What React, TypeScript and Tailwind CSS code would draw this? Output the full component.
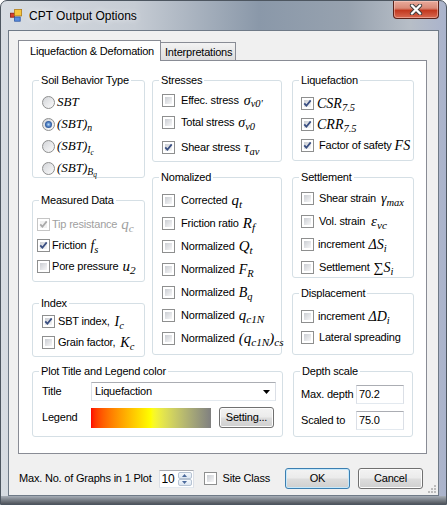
import React from 'react';

// serif italic used for the engineering symbols
const M = "font-['Liberation_Serif',serif] italic";

type Kids = { children?: React.ReactNode };

function Check({ checked = false, disabled = false }: { checked?: boolean; disabled?: boolean }) {
  return (
    <span
      className={`relative shrink-0 w-[13px] h-[13px] border p-[2px] bg-white ${
        disabled ? 'border-[#c5c5c5]' : 'border-[#8e8f8f]'
      }`}
    >
      <span
        className={`block w-full h-full ${
          disabled ? 'bg-[#f1f1f1]' : 'bg-linear-to-br from-[#cbced3] to-[#f7f7f8]'
        }`}
      />
      {checked && (
        <svg className="absolute left-0 top-0" width="11" height="11" viewBox="0 0 11 11">
          <path
            d="M2.2 5.3 L4.4 7.7 L8.7 2.4"
            fill="none"
            stroke={disabled ? '#a9a9a9' : '#3a4f82'}
            strokeWidth="1.8"
          />
        </svg>
      )}
    </span>
  );
}

function Radio({ checked = false }: { checked?: boolean }) {
  return (
    <span className="flex items-center justify-center shrink-0 w-[13px] h-[13px] rounded-full border border-[#8e8f8f] bg-linear-to-br from-[#d3d5d9] to-[#fbfbfb]">
      {checked && (
        <span className="w-[7px] h-[7px] rounded-full bg-radial from-[#b8daf8] via-[#3f6fb5] to-[#1b3b73]" />
      )}
    </span>
  );
}

function Group({ title, className = '', children }: { title: string; className?: string } & Kids) {
  return (
    <div className={`relative border border-[#d5dfe5] rounded-[3px] ${className}`}>
      <span className="absolute left-[6px] top-[-8px] bg-white px-[2px] leading-[14px] whitespace-nowrap">
        {title}
      </span>
      {children}
    </div>
  );
}

function Row({ className = '', children }: { className?: string } & Kids) {
  return <div className={`flex items-center whitespace-nowrap ${className}`}>{children}</div>;
}

const btn =
  'flex items-center justify-center rounded-[3px] border bg-[linear-gradient(#f3f3f3_0%,#ebebeb_48%,#dddddd_52%,#cfcfcf_100%)]';

export default function App() {
  return (
    <div className="w-[447px] h-[505px] overflow-hidden bg-white font-['Liberation_Sans',Arial,sans-serif] text-[11px] tracking-[-0.2px] text-black">
      <div className="w-[447px] h-[505px] flex flex-col rounded-t-[7px] border border-[#4d5660] bg-[linear-gradient(90deg,#d7dce2_0%,#c6ccd4_30%,#8a98a9_58%,#97a2af_78%,#b7bec7_92%,#aab3cc_100%)]">
        {/* title bar */}
        <div className="h-[29px] flex items-center shrink-0">
          <svg className="ml-[9px]" width="12" height="13" viewBox="0 0 12 13">
            <rect x="0.5" y="4.2" width="4" height="4" fill="#d9402f" stroke="#8b1c12" strokeWidth="0.8" />
            <rect x="4.6" y="0.5" width="7" height="6.4" fill="#f6c63e" stroke="#b07d18" strokeWidth="0.8" />
            <rect x="4.6" y="8" width="5.6" height="4.2" fill="#5b8ee0" stroke="#2a55a0" strokeWidth="0.8" />
          </svg>
          <span className="ml-[7px] text-[12px] tracking-normal [text-shadow:0_0_6px_rgba(255,255,255,0.95)]">
            CPT Output Options
          </span>
          <div className="ml-auto mr-[7px] self-start w-[46px] h-[18px] flex items-center justify-center rounded-b-[4px] border border-t-0 border-[#5a2219] bg-[linear-gradient(#e9aa9b_0%,#d98a78_42%,#c2391f_56%,#d86a52_100%)] shadow-[inset_0_0_0_1px_rgba(255,220,210,0.45)]">
            <svg width="14" height="11" viewBox="0 0 14 11">
              <path d="M3 1.5 L11 9.5 M11 1.5 L3 9.5" stroke="#3d3d3d" strokeWidth="4.2" strokeLinecap="round" />
              <path d="M3 1.5 L11 9.5 M11 1.5 L3 9.5" stroke="#ffffff" strokeWidth="2.4" strokeLinecap="round" />
            </svg>
          </div>
        </div>

        {/* client area */}
        <div className="relative ml-[7px] w-[431px] h-[466px] shrink-0 border border-[#6f7a87] bg-[#f0f0f0]">
          {/* tabs */}
          <div className="mt-[9px] ml-[9px] flex items-end h-[20px]">
            <div className="relative z-10 -mb-[1px] w-[143px] h-[21px] flex items-center pl-[11px] bg-white border border-b-0 border-[#898c95]">
              Liquefaction &amp; Defomation
            </div>
            <div className="w-[75px] h-[18px] flex items-center pl-[4px] pt-[1px] border border-l-0 border-b-0 border-[#898c95] bg-linear-to-b from-[#f3f3f3] to-[#dedede]">
              Interpretations
            </div>
          </div>

          {/* tab page */}
          <div className="ml-[9px] w-[409px] h-[394px] border border-[#898c95] bg-white pl-[13px] pt-[19px]">
            <div className="flex items-start">
              {/* left column */}
              <div className="flex flex-col w-[113px]">
                <Group title="Soil Behavior Type" className="h-[98px] pt-[10px] pl-[9px]">
                  <Row className="h-[22px]">
                    <Radio />
                    <span className={`${M} ml-[2px] text-[13px] tracking-normal`}>SBT</span>
                  </Row>
                  <Row className="h-[22px]">
                    <Radio checked />
                    <span className={`${M} ml-[2px] text-[13px] tracking-normal`}>
                      (SBT)<sub>n</sub>
                    </span>
                  </Row>
                  <Row className="h-[22px]">
                    <Radio />
                    <span className={`${M} ml-[2px] text-[13px] tracking-normal`}>
                      (SBT)<sub>I<sub>c</sub></sub>
                    </span>
                  </Row>
                  <Row className="h-[22px]">
                    <Radio />
                    <span className={`${M} ml-[2px] text-[13px] tracking-normal`}>
                      (SBT)<sub>B<sub>q</sub></sub>
                    </span>
                  </Row>
                </Group>

                <Group title="Measured Data" className="mt-[22px] h-[82px] pt-[13px] pl-[4px]">
                  <Row className="h-[21px] text-[#a0a0a0]">
                    <Check checked disabled />
                    <span className="ml-[2px]">Tip resistance</span>
                    <span className={`${M} ml-[4px] text-[15px] tracking-normal`}>
                      q<sub>c</sub>
                    </span>
                  </Row>
                  <Row className="h-[21px]">
                    <Check checked />
                    <span className="ml-[2px]">Friction</span>
                    <span className={`${M} ml-[4px] text-[14px] tracking-normal`}>
                      f<sub>s</sub>
                    </span>
                  </Row>
                  <Row className="h-[21px]">
                    <Check />
                    <span className="ml-[2px]">Pore pressure</span>
                    <span className={`${M} ml-[4px] text-[15px] tracking-normal`}>
                      u<sub>2</sub>
                    </span>
                  </Row>
                </Group>

                <Group title="Index" className="mt-[21px] h-[54px] pt-[7px] pl-[9px]">
                  <Row className="h-[21px]">
                    <Check checked />
                    <span className="ml-[3px]">SBT index,</span>
                    <span className={`${M} ml-[5px] text-[14px] tracking-normal`}>
                      I<sub>c</sub>
                    </span>
                  </Row>
                  <Row className="h-[21px]">
                    <Check />
                    <span className="ml-[3px]">Grain factor,</span>
                    <span className={`${M} ml-[5px] text-[14px] tracking-normal`}>
                      K<sub>c</sub>
                    </span>
                  </Row>
                </Group>
              </div>

              {/* middle column */}
              <div className="flex flex-col w-[130px] ml-[7px]">
                <Group title="Stresses" className="h-[82px] pt-[8px] pl-[9px]">
                  <Row className="h-[22px]">
                    <Check />
                    <span className="ml-[6px]">Effec. stress</span>
                    <span className={`${M} ml-[5px] text-[14px] tracking-normal`}>
                      σ<sub>v0'</sub>
                    </span>
                  </Row>
                  <Row className="h-[23px]">
                    <Check />
                    <span className="ml-[6px]">Total stress</span>
                    <span className={`${M} ml-[4px] text-[14px] tracking-normal`}>
                      σ<sub>v0</sub>
                    </span>
                  </Row>
                  <Row className="mt-[2px] h-[23px]">
                    <Check checked />
                    <span className="ml-[6px]">Shear stress</span>
                    <span className={`${M} ml-[4px] text-[14px] tracking-normal`}>
                      τ<sub>av</sub>
                    </span>
                  </Row>
                </Group>

                <Group title="Nomalized" className="mt-[15px] h-[178px] pt-[11px] pl-[9px]">
                  <Row className="h-[23px]">
                    <Check />
                    <span className="ml-[6px]">Corrected</span>
                    <span className={`${M} ml-[4px] text-[15px] tracking-normal`}>
                      q<sub>t</sub>
                    </span>
                  </Row>
                  <Row className="h-[23px]">
                    <Check />
                    <span className="ml-[6px]">Friction ratio</span>
                    <span className={`${M} ml-[4px] text-[15px] tracking-normal`}>
                      R<sub>f</sub>
                    </span>
                  </Row>
                  <Row className="h-[23px]">
                    <Check />
                    <span className="ml-[6px]">Normalized</span>
                    <span className={`${M} ml-[4px] text-[15px] tracking-normal`}>
                      Q<sub>t</sub>
                    </span>
                  </Row>
                  <Row className="h-[23px]">
                    <Check />
                    <span className="ml-[6px]">Normalized</span>
                    <span className={`${M} ml-[4px] text-[14px] tracking-normal`}>
                      F<sub>R</sub>
                    </span>
                  </Row>
                  <Row className="h-[23px]">
                    <Check />
                    <span className="ml-[6px]">Normalized</span>
                    <span className={`${M} ml-[4px] text-[14px] tracking-normal`}>
                      B<sub>q</sub>
                    </span>
                  </Row>
                  <Row className="h-[23px]">
                    <Check />
                    <span className="ml-[6px]">Normalized</span>
                    <span className={`${M} ml-[4px] text-[15px] tracking-normal`}>
                      q<sub>c1N</sub>
                    </span>
                  </Row>
                  <Row className="h-[23px]">
                    <Check />
                    <span className="ml-[6px]">Normalized</span>
                    <span className={`${M} ml-[4px] text-[15px] tracking-normal`}>
                      (q<sub>c1N</sub>)<sub>cs</sub>
                    </span>
                  </Row>
                </Group>
              </div>

              {/* right column */}
              <div className="flex flex-col w-[122px] ml-[10px]">
                <Group title="Liquefaction" className="h-[81px] pt-[12px] pl-[8px]">
                  <Row className="h-[21px]">
                    <Check checked />
                    <span className={`${M} ml-[3px] text-[14px] tracking-normal`}>
                      CSR<sub>7.5</sub>
                    </span>
                  </Row>
                  <Row className="h-[21px]">
                    <Check checked />
                    <span className={`${M} ml-[3px] text-[14px] tracking-normal`}>
                      CRR<sub>7.5</sub>
                    </span>
                  </Row>
                  <Row className="h-[21px]">
                    <Check checked />
                    <span className="ml-[5px]">Factor of safety</span>
                    <span className={`${M} ml-[3px] text-[14px] tracking-normal`}>FS</span>
                  </Row>
                </Group>

                <Group title="Settlement" className="mt-[16px] h-[101px] pt-[9px] pl-[8px]">
                  <Row className="h-[23px]">
                    <Check />
                    <span className="ml-[5px]">Shear strain</span>
                    <span className={`${M} ml-[5px] text-[14px] tracking-normal`}>
                      γ<sub>max</sub>
                    </span>
                  </Row>
                  <Row className="h-[23px]">
                    <Check />
                    <span className="ml-[5px]">Vol. strain</span>
                    <span className={`${M} ml-[6px] text-[15px] tracking-normal`}>
                      ε<sub>vc</sub>
                    </span>
                  </Row>
                  <Row className="h-[23px]">
                    <Check />
                    <span className="ml-[4px]">increment</span>
                    <span className={`${M} ml-[4px] text-[14px] tracking-normal`}>
                      ΔS<sub>i</sub>
                    </span>
                  </Row>
                  <Row className="h-[23px]">
                    <Check />
                    <span className="ml-[5px]">Settlement</span>
                    <span className={`${M} ml-[4px] text-[14px] tracking-normal`}>
                      ∑S<sub>i</sub>
                    </span>
                  </Row>
                </Group>

                <Group title="Displacement" className="mt-[15px] h-[62px] pt-[12px] pl-[8px]">
                  <Row className="h-[21px]">
                    <Check />
                    <span className="ml-[4px]">increment</span>
                    <span className={`${M} ml-[4px] text-[14px] tracking-normal`}>
                      ΔD<sub>i</sub>
                    </span>
                  </Row>
                  <Row className="h-[21px]">
                    <Check />
                    <span className="ml-[5px]">Lateral spreading</span>
                  </Row>
                </Group>
              </div>
            </div>

            {/* bottom groups */}
            <div className="flex items-start mt-[14px]">
              <Group title="Plot Title and Legend color" className="w-[251px] h-[66px] pt-[10px] pl-[9px]">
                <Row className="h-[19px]">
                  <span className="w-[49px]">Title</span>
                  <div className="w-[185px] h-[19px] flex items-center pl-[3px] pr-[5px] bg-white border border-[#abadb3] border-b-[#e3e9ef] border-x-[#dbdfe6]">
                    <span>Liquefaction</span>
                    <svg className="ml-auto" width="7" height="4" viewBox="0 0 7 4">
                      <path d="M0 0 L7 0 L3.5 4 Z" fill="#000" />
                    </svg>
                  </div>
                </Row>
                <Row className="mt-[6px] h-[21px]">
                  <span className="w-[49px]">Legend</span>
                  <div className="w-[120px] h-[20px] bg-linear-to-r from-[#ff0000] via-[#ffff00] to-[#808080]" />
                  <div className={`${btn} ml-[8px] w-[55px] h-[21px] border-[#707070] shadow-[inset_0_0_0_1px_#fcfcfc]`}>
                    Setting...
                  </div>
                </Row>
              </Group>

              <Group title="Depth scale" className="ml-[10px] w-[120px] h-[66px] pt-[13px] pl-[7px]">
                <Row className="h-[19px]">
                  <span className="w-[55px]">Max. depth</span>
                  <div className="w-[48px] h-[19px] flex items-center pl-[2px] bg-white border border-[#abadb3] border-b-[#e3e9ef] border-x-[#dbdfe6]">
                    70.2
                  </div>
                </Row>
                <Row className="mt-[7px] h-[19px]">
                  <span className="w-[55px]">Scaled to</span>
                  <div className="w-[48px] h-[19px] flex items-center pl-[2px] bg-white border border-[#abadb3] border-b-[#e3e9ef] border-x-[#dbdfe6]">
                    75.0
                  </div>
                </Row>
              </Group>
            </div>
          </div>

          {/* bottom bar */}
          <div className="mt-[14px] h-[21px] flex items-center pl-[10px] pr-[15px]">
            <span>Max. No. of Graphs in 1 Plot</span>
            <div className="ml-[7px] flex w-[35px] h-[18px] border border-[#abadb3] border-b-[#e3e9ef] border-x-[#dbdfe6] bg-white">
              <span className="flex-1 pl-[2px] leading-[16px] text-[12px]">10</span>
              <div className="flex flex-col w-[16px] p-[1px]">
                <div className="flex-1 flex items-center justify-center rounded-[2px] border border-[#b6c3d3] bg-linear-to-b from-[#f4f8fc] to-[#dce6f2]">
                  <svg width="5" height="3" viewBox="0 0 5 3">
                    <path d="M0 3 L5 3 L2.5 0 Z" fill="#4b6a9c" />
                  </svg>
                </div>
                <div className="flex-1 flex items-center justify-center rounded-[2px] border border-[#b6c3d3] bg-linear-to-b from-[#f4f8fc] to-[#dce6f2]">
                  <svg width="5" height="3" viewBox="0 0 5 3">
                    <path d="M0 0 L5 0 L2.5 3 Z" fill="#4b6a9c" />
                  </svg>
                </div>
              </div>
            </div>
            <span className="ml-[10px] flex">
              <Check />
            </span>
            <span className="ml-[6px]">Site Class</span>
            <div className={`${btn} ml-auto w-[65px] h-[21px] border-[#3c7fb1] shadow-[inset_0_0_0_1px_#c6e9fc]`}>OK</div>
            <div className={`${btn} ml-[8px] w-[65px] h-[21px] border-[#707070] shadow-[inset_0_0_0_1px_#fcfcfc]`}>
              Cancel
            </div>
          </div>

          {/* size grip */}
          <svg className="absolute right-[1px] bottom-[1px]" width="10" height="10" viewBox="0 0 10 10">
            <g fill="#bcbcbc">
              <rect x="7" y="1" width="2" height="2" />
              <rect x="4" y="4" width="2" height="2" />
              <rect x="7" y="4" width="2" height="2" />
              <rect x="1" y="7" width="2" height="2" />
              <rect x="4" y="7" width="2" height="2" />
              <rect x="7" y="7" width="2" height="2" />
            </g>
          </svg>
        </div>

        <div className="flex-1 bg-linear-to-b from-[#a7aeb7] to-[#50555c]" />
      </div>
    </div>
  );
}
